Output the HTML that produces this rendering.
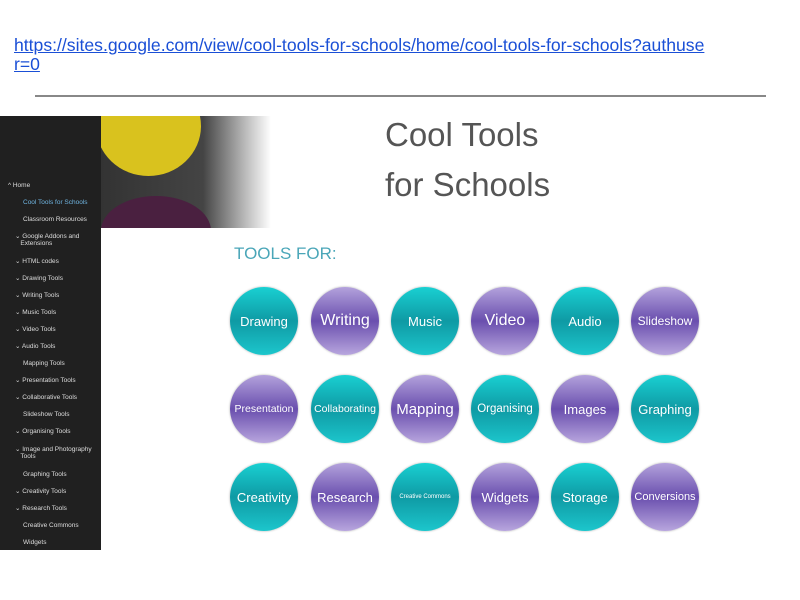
<!DOCTYPE html>
<html><head><meta charset="utf-8"><style>
body{margin:0;width:800px;height:600px;background:#fff;position:relative;overflow:hidden;font-family:"Liberation Sans",sans-serif}
.link{position:absolute;left:14px;top:36px;color:#1a4fd6;font-size:17.6px;line-height:19px;text-decoration:underline;width:702px;word-break:break-all}
.hr{position:absolute;left:35px;top:95px;width:731px;height:2px;background:#888}
.side{position:absolute;left:0;top:116px;width:101px;height:434px;background:#202020}
.side div{position:absolute;color:#ddd;font-size:6.5px;line-height:7px;white-space:nowrap}
.img{position:absolute;left:101px;top:116px;width:170px;height:112px;background:linear-gradient(90deg,#333 0%,#444 60%,#bbb 85%,#fff 100%);overflow:hidden}
.title{position:absolute;left:385px;top:110px;font-size:33px;color:#555;line-height:50px}
.tf{position:absolute;left:234px;top:244px;font-size:17px;color:#4aa6b8}
.c{position:absolute;width:68px;height:68px;border-radius:50%;display:flex;align-items:center;justify-content:center;color:#fff;font-size:13px;box-shadow:0 0 2px #aaa}
.t{background:linear-gradient(#19d0d2,#0f9aa4 50%,#1cc6cc)}
.p{background:linear-gradient(#b3a2dc,#6a4fae 50%,#b8a6de)}
</style></head><body>
<div class="link">https://sites.google.com/view/cool-tools-for-schools/home/cool-tools-for-schools?authuse<br>r=0</div>
<div class="hr"></div>
<div class="side">
<div style="left:8px;top:66px">^ Home</div>
<div style="left:23px;top:83px;color:#6fb4e0">Cool Tools for Schools</div>
<div style="left:23px;top:100px">Classroom Resources</div>
<div style="left:15px;top:117px">⌄ Google Addons and<br>&nbsp;&nbsp;&nbsp;Extensions</div>
<div style="left:15px;top:142px">⌄ HTML codes</div>
<div style="left:15px;top:159px">⌄ Drawing Tools</div>
<div style="left:15px;top:176px">⌄ Writing Tools</div>
<div style="left:15px;top:193px">⌄ Music Tools</div>
<div style="left:15px;top:210px">⌄ Video Tools</div>
<div style="left:15px;top:227px">⌄ Audio Tools</div>
<div style="left:23px;top:244px">Mapping Tools</div>
<div style="left:15px;top:261px">⌄ Presentation Tools</div>
<div style="left:15px;top:278px">⌄ Collaborative Tools</div>
<div style="left:23px;top:295px">Slideshow Tools</div>
<div style="left:15px;top:312px">⌄ Organising Tools</div>
<div style="left:15px;top:330px">⌄ Image and Photography<br>&nbsp;&nbsp;&nbsp;Tools</div>
<div style="left:23px;top:355px">Graphing Tools</div>
<div style="left:15px;top:372px">⌄ Creativity Tools</div>
<div style="left:15px;top:389px">⌄ Research Tools</div>
<div style="left:23px;top:406px">Creative Commons</div>
<div style="left:23px;top:423px">Widgets</div>
</div>
<div class="img">
<div style="position:absolute;left:-5px;top:-40px;width:105px;height:100px;border-radius:50%;background:#d9c21e"></div>
<div style="position:absolute;left:0;top:80px;width:110px;height:70px;border-radius:50%;background:#4a2040"></div>
</div>
<div class="title">Cool Tools<br>for Schools</div>
<div class="tf">TOOLS FOR:</div>
<div class="c t" style="left:230px;top:287px">Drawing</div>
<div class="c p" style="left:311px;top:287px;font-size:16px">Writing</div>
<div class="c t" style="left:391px;top:287px">Music</div>
<div class="c p" style="left:471px;top:287px;font-size:16px">Video</div>
<div class="c t" style="left:551px;top:287px">Audio</div>
<div class="c p" style="left:631px;top:287px;font-size:12px">Slideshow</div>
<div class="c p" style="left:230px;top:375px;font-size:10.5px">Presentation</div>
<div class="c t" style="left:311px;top:375px;font-size:10.5px">Collaborating</div>
<div class="c p" style="left:391px;top:375px;font-size:15px">Mapping</div>
<div class="c t" style="left:471px;top:375px;font-size:11.5px">Organising</div>
<div class="c p" style="left:551px;top:375px">Images</div>
<div class="c t" style="left:631px;top:375px">Graphing</div>
<div class="c t" style="left:230px;top:463px">Creativity</div>
<div class="c p" style="left:311px;top:463px">Research</div>
<div class="c t" style="left:391px;top:463px;font-size:6px">Creative Commons</div>
<div class="c p" style="left:471px;top:463px">Widgets</div>
<div class="c t" style="left:551px;top:463px">Storage</div>
<div class="c p" style="left:631px;top:463px;font-size:11px">Conversions</div>
</body></html>
